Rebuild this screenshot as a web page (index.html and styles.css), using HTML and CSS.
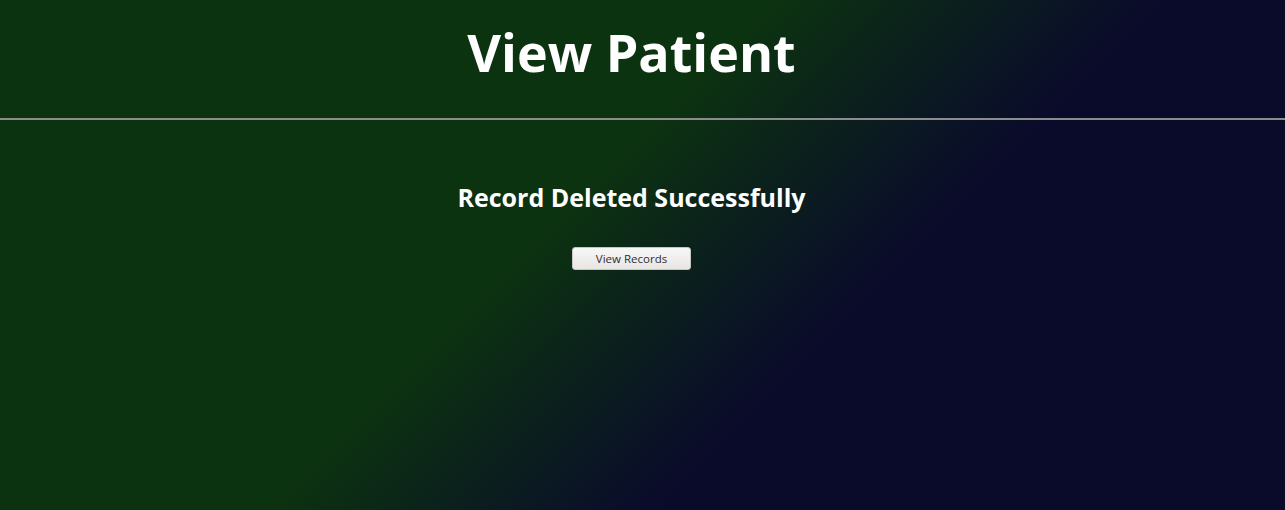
FILE: index.html
```html
<!DOCTYPE html>
<html lang="en">
<head>
<meta charset="utf-8">
<title>View Patient</title>
<link rel="stylesheet" href="styles.css">
</head>
<body>
<header class="page-header">
  <h1 class="page-title">View Patient</h1>
</header>
<hr class="divider">
<main class="content">
  <h2 class="message">Record Deleted Successfully</h2>
  <button class="btn" type="button">View Records</button>
</main>
</body>
</html>
```

FILE: styles.css
```css
html, body {
  margin: 0;
  padding: 0;
  height: 100%;
}
body {
  min-height: 100vh;
  background: linear-gradient(135deg, #0c3310 43%, #0a0b2b 65%);
  font-family: "Open Sans", "Noto Sans", sans-serif;
  color: #ffffff;
}
.page-header {
  padding-right: 22px;
  text-align: center;
}
.page-title {
  margin: 0;
  padding-top: 15px;
  padding-bottom: 29px;
  font-size: 52px;
  line-height: 74px;
  font-weight: 700;
}
.divider {
  margin: 0;
  border: 0;
  height: 2px;
  background: #8c8c8c;
}
.content {
  padding-right: 22px;
  display: flex;
  flex-direction: column;
  align-items: center;
}
.message {
  margin: 61px 0 0;
  font-size: 25px;
  line-height: 32px;
  font-weight: 700;
}
.btn {
  margin-top: 34px;
  width: 119px;
  height: 23px;
  padding: 0;
  font-family: "Open Sans", "Noto Sans", sans-serif;
  font-size: 11.5px;
  color: #2e2e2e;
  background: linear-gradient(#f7f7f7, #e8e6e4);
  border: 1px solid #c8c6c3;
  border-radius: 3px;
}
```
